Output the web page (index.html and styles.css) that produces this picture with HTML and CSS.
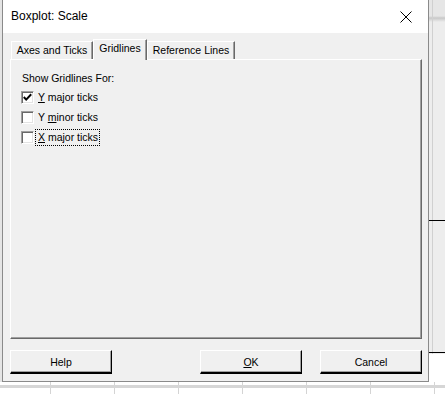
FILE: index.html
```html
<!DOCTYPE html>
<html>
<head>
  <title>Boxplot: Scale</title>
  <link rel="stylesheet" href="styles.css">
</head>
<body>
  <div class="screen">
    <div class="edge-left"></div>
    <div class="dialog">
      <div class="titlebar">
        <span class="title">Boxplot: Scale</span>
        <svg class="close" width="12" height="12" viewBox="0 0 12 12">
          <path d="M0.5 0.5 L11.5 11.5 M11.5 0.5 L0.5 11.5" stroke="#000" stroke-width="1" fill="none"/>
        </svg>
      </div>
      <div class="body">
        <div class="tabs">
          <div class="tab tab-axes">Axes and Ticks</div>
          <div class="tab tab-grid selected">Gridlines</div>
          <div class="tab tab-ref">Reference Lines</div>
        </div>
        <div class="panel">
          <div class="heading">Show Gridlines For:</div>
          <div class="check-row">
            <span class="box">
              <svg width="11" height="11" viewBox="0 0 11 11">
                <path d="M1.8 5 L4.2 7.6 L9.2 2.2" stroke="#000" stroke-width="2" fill="none"/>
              </svg>
            </span>
            <span class="label"><u>Y</u> major ticks</span>
          </div>
          <div class="check-row">
            <span class="box"></span>
            <span class="label">Y <u>m</u>inor ticks</span>
          </div>
          <div class="check-row">
            <span class="box"></span>
            <span class="label focus"><u>X</u> major ticks</span>
          </div>
        </div>
        <div class="buttons">
          <button class="btn">Help</button>
          <div class="spacer"></div>
          <button class="btn"><u>O</u>K</button>
          <button class="btn">Cancel</button>
        </div>
      </div>
    </div>
    <div class="edge-right"></div>
  </div>
  <div class="edge-bottom"></div>
</body>
</html>
```

FILE: styles.css
```css
* { box-sizing: border-box; }
html, body {
  margin: 0;
  padding: 0;
  width: 445px;
  height: 394px;
  overflow: hidden;
  background: #fff;
  font-family: "Liberation Sans", Arial, sans-serif;
  font-size: 10.5px;
  color: #000;
}
.screen {
  display: flex;
  height: 382px;
}
.edge-left {
  width: 2px;
  background: #e4e4e4;
}
.edge-right {
  flex: 1;
  background:
    linear-gradient(#000, #000) 0 220px / 100% 1px no-repeat,
    linear-gradient(#000, #000) 0 352px / 100% 1px no-repeat,
    linear-gradient(#fff, #fff) 0 354px / 100% 100% no-repeat,
    linear-gradient(#d0d0d0, #d0d0d0) 3px 0 / 1px 100% no-repeat,
    linear-gradient(#e6e6e6 16px, #c8c8c8 18px, #ededed 22px);
}
.edge-bottom {
  height: 12px;
  background:
    linear-gradient(#d6d6d6, #d6d6d6) 0 3px / 100% 3px no-repeat,
    repeating-linear-gradient(90deg, transparent 0 49px, #d4d4d4 49px 50px, transparent 50px 64px) 1px 0,
    #fff;
}
.dialog {
  width: 427px;
  display: flex;
  flex-direction: column;
  border: 1px solid #8a8a8a;
  border-top: none;
  background: #f0f0f0;
}
.titlebar {
  height: 33px;
  background: #fff;
  display: flex;
  align-items: center;
  padding: 0 8px 0 8px;
}
.title {
  flex: 1;
  font-size: 12px;
  padding-bottom: 1px;
}
.close {
  margin-right: 8px;
  margin-top: 1px;
}
.body {
  padding: 6px 6px 0 7px;
  flex: 1;
  display: flex;
  flex-direction: column;
}
.tabs {
  display: flex;
  height: 20px;
  padding-left: 1px;
  position: relative;
  z-index: 1;
}
.tab {
  height: 18px;
  margin-top: 2px;
  text-align: center;
  line-height: 17px;
  border-top: 1px solid #fff;
  border-left: 1px solid #fff;
  border-right: 1px solid #696969;
  box-shadow: inset -1px 0 #a0a0a0;
  background: #f0f0f0;
}
.tab-axes { width: 82px; }
.tab-grid { width: 54px; }
.tab-ref { width: 88px; }
.tab.selected {
  height: 21px;
  margin-top: 0;
  line-height: 17px;
}
.panel {
  height: 280px;
  border-top: 1px solid #fff;
  border-left: 1px solid #fff;
  border-right: 1px solid #696969;
  border-bottom: 1px solid #696969;
  box-shadow: inset -1px -1px #a0a0a0;
  padding: 9px 0 0 10px;
}
.heading {
  height: 18px;
  line-height: 18px;
  padding-left: 1px;
}
.check-row {
  display: flex;
  align-items: center;
  height: 20px;
}
.box {
  width: 13px;
  height: 13px;
  border-top: 1px solid #a0a0a0;
  border-left: 1px solid #a0a0a0;
  border-right: 1px solid #fff;
  border-bottom: 1px solid #fff;
  box-shadow: inset 1px 1px #696969, inset -1px -1px #e3e3e3;
  background: #fff;
  display: flex;
  align-items: center;
  justify-content: center;
  margin-right: 3px;
}
.label {
  padding: 0 1px;
  line-height: 15px;
}
.label.focus {
  outline: 1px dotted #000;
  margin-left: -1px;
  padding: 0 1px 0 2px;
}
.buttons {
  display: flex;
  gap: 18px;
  margin-top: 11px;
  padding-left: 1px;
}
.spacer { flex: 1; }
.btn {
  width: 102px;
  height: 24px;
  font-family: "Liberation Sans", Arial, sans-serif;
  font-size: 10.5px;
  background: #f0f0f0;
  color: #000;
  border-top: 1px solid #fff;
  border-left: 1px solid #fff;
  border-right: 1px solid #000;
  border-bottom: 2px solid #000;
  box-shadow: inset -1px -1px #a0a0a0;
  padding: 0;
}
.btn:first-child { margin-left: -1px; }
```
